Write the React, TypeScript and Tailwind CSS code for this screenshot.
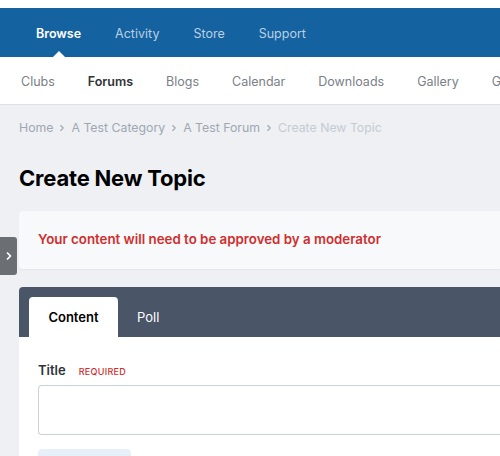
import { ChevronRight } from "lucide-react";

const MAIN_NAV = ["Browse", "Activity", "Store", "Support"];
const SUB_NAV = ["Clubs", "Forums", "Blogs", "Calendar", "Downloads", "Gallery", "Guidelines"];
const CRUMBS = ["Home", "A Test Category", "A Test Forum"];

export default function App() {
  return (
    <div
      className="relative h-[456px] w-[500px] overflow-hidden bg-[#eef0f4] text-[13px]"
      style={{ fontFamily: "Inter, 'Noto Sans', sans-serif" }}
    >
      {/* Top nav */}
      <div className="h-2 bg-white" />
      <div className="flex h-[49px] items-center gap-[34px] bg-[#14629f] pt-[3px] pl-9 text-[12.5px] whitespace-nowrap">
        {MAIN_NAV.map((item, i) => (
          <div key={item} className="relative flex h-full items-center">
            <span
              className={
                i === 0 ? "font-semibold text-white" : "text-[#b9d0e4]"
              }
            >
              {item}
            </span>
            {i === 0 && (
              <span className="absolute bottom-0 left-1/2 h-0 w-0 -translate-x-1/2 border-x-[6px] border-b-[6px] border-x-transparent border-b-white" />
            )}
          </div>
        ))}
      </div>

      {/* Sub nav */}
      <div className="flex h-[48px] items-center gap-[33px] border-b border-[#dde1e7] bg-white pt-[3px] pl-[21px] text-[12.5px] whitespace-nowrap">
        {SUB_NAV.map((item) => (
          <span
            key={item}
            className={
              item === "Forums"
                ? "font-semibold text-[#2f3338]"
                : "text-[#7b8088]"
            }
          >
            {item}
          </span>
        ))}
      </div>

      <div className="pl-[19px]">
        {/* Breadcrumb */}
        <div className="mt-[14px] flex items-center gap-[4px] text-[12.3px] whitespace-nowrap text-[#a0a7b2]">
          {CRUMBS.map((c) => (
            <span key={c} className="flex items-center gap-[4px]">
              {c}
              <ChevronRight className="h-[10px] w-[10px]" strokeWidth={2.75} />
            </span>
          ))}
          <span className="text-[#c6cbd3]">Create New Topic</span>
        </div>

        <h1 className="mt-[27px] text-[22px] leading-7 font-bold tracking-[-0.2px] text-black">
          Create New Topic
        </h1>

        {/* Moderation notice */}
        <div className="mt-[19px] flex h-[58px] items-center rounded-l-[4px] bg-[#f7f9fb] pl-[19px] shadow-[0_1px_2px_rgba(0,0,0,0.05)]">
          <span className="text-[13.3px] font-semibold whitespace-nowrap text-[#cf2e2e]">
            Your content will need to be approved by a moderator
          </span>
        </div>

        {/* Form */}
        <div className="mt-[18px] overflow-hidden rounded-tl-[4px] bg-white">
          <div className="flex h-[50px] items-end gap-[19px] bg-[#4a5568] pl-[10px]">
            <div className="flex h-[40px] w-[89px] items-center justify-center rounded-t-[4px] bg-white font-semibold text-black">
              Content
            </div>
            <div className="flex h-[40px] items-center text-white">Poll</div>
          </div>
          <div className="pl-[19px] pt-[24px] pb-6">
            <div className="flex items-baseline gap-[13px]">
              <span className="font-semibold text-[#2f3338]">Title</span>
              <span className="text-[9px] font-medium tracking-[0.3px] text-[#cf2e2e]">
                REQUIRED
              </span>
            </div>
            <div className="mt-[4px] h-[50px] rounded-l-[4px] border border-r-0 border-[#ccd1d9] bg-white" />
            <div className="mt-[14px] h-[30px] w-[93px] rounded-[4px] bg-[#e7f0f9]" />
          </div>
        </div>
      </div>

      {/* Side toggle */}
      <div className="absolute top-[237px] left-0 flex h-[38px] w-[17px] items-center justify-center rounded-r-[3px] bg-[#6b6e72]">
        <ChevronRight className="h-3 w-3 text-white" strokeWidth={3.5} />
      </div>
    </div>
  );
}
